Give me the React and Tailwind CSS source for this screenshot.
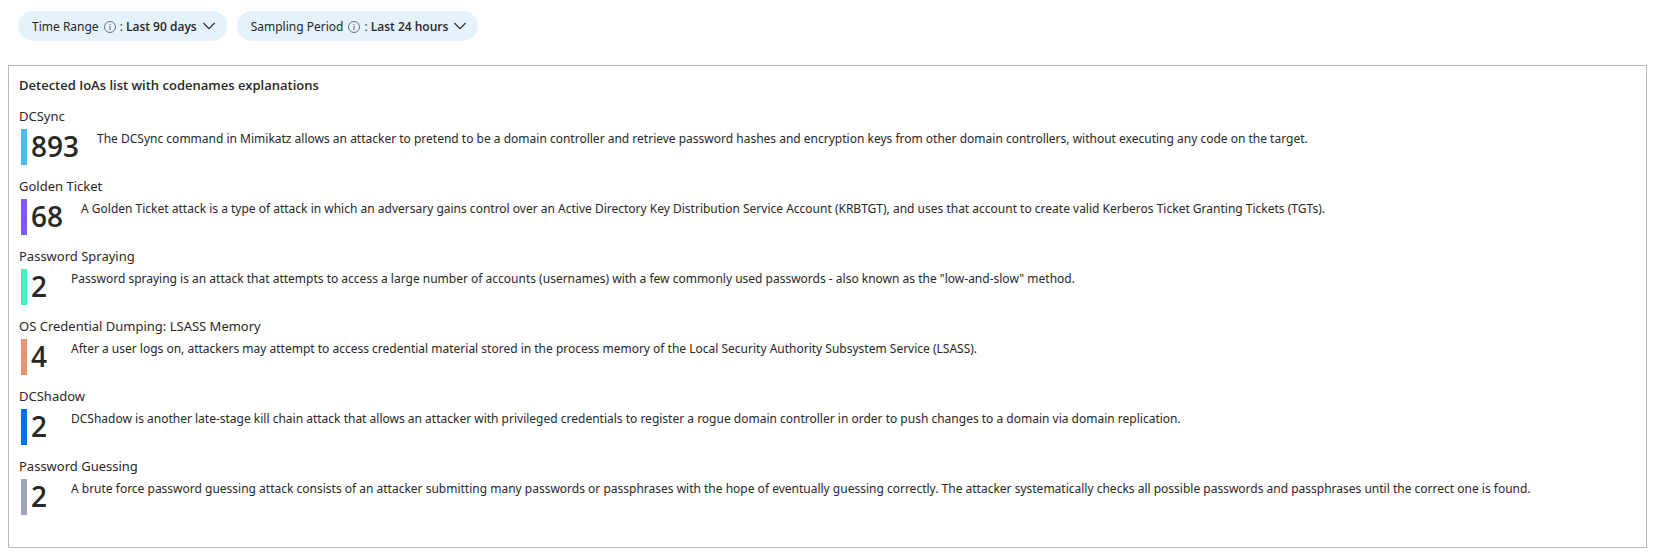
const items = [
  { name: 'DCSync', count: 893, bar: 'bg-[#47bdf5]', text: 'The DCSync command in Mimikatz allows an attacker to pretend to be a domain controller and retrieve password hashes and encryption keys from other domain controllers, without executing any code on the target.' },
  { name: 'Golden Ticket', count: 68, bar: 'bg-[#7e58ff]', text: 'A Golden Ticket attack is a type of attack in which an adversary gains control over an Active Directory Key Distribution Service Account (KRBTGT), and uses that account to create valid Kerberos Ticket Granting Tickets (TGTs).' },
  { name: 'Password Spraying', count: 2, bar: 'bg-[#44f1c5]', text: 'Password spraying is an attack that attempts to access a large number of accounts (usernames) with a few commonly used passwords - also known as the "low-and-slow" method.' },
  { name: 'OS Credential Dumping: LSASS Memory', count: 4, bar: 'bg-[#eb9371]', text: 'After a user logs on, attackers may attempt to access credential material stored in the process memory of the Local Security Authority Subsystem Service (LSASS).' },
  { name: 'DCShadow', count: 2, bar: 'bg-[#0071ed]', text: 'DCShadow is another late-stage kill chain attack that allows an attacker with privileged credentials to register a rogue domain controller in order to push changes to a domain via domain replication.' },
  { name: 'Password Guessing', count: 2, bar: 'bg-[#a2a4b9]', text: 'A brute force password guessing attack consists of an attacker submitting many passwords or passphrases with the hope of eventually guessing correctly. The attacker systematically checks all possible passwords and passphrases until the correct one is found.' },
];

function Pill({ label, value }) {
  return (
    <button type="button" className="flex h-[30px] items-center rounded-full bg-[#e5f1fb] pt-[2px] pr-3 pl-[14px] text-[12px]">
      <span className="font-['Noto_Sans',sans-serif]">{label}</span>
      <svg className="mr-1 ml-[5px] size-3 text-[#666]" viewBox="0 0 12 12" fill="none" stroke="currentColor" aria-hidden="true">
        <circle cx="6" cy="6" r="5.5" strokeWidth="0.9" />
        <path d="M6 5v4M6 3v1" />
      </svg>
      <span>:&nbsp;</span>
      <span className="font-semibold">{value}</span>
      <svg className="mb-[2px] ml-[6px] h-2 w-3" viewBox="0 0 12 8" fill="none" stroke="currentColor" strokeWidth="1.1" aria-hidden="true">
        <path d="M.4 1L6 6.6 11.6 1" />
      </svg>
    </button>
  );
}

export default function App() {
  return (
    <main className="bg-white pt-[11px] pr-[6px] pb-1 pl-2 font-['Open_Sans',sans-serif] text-[#292827]">
      <div className="flex gap-[10px] px-[10px]">
        <Pill label="Time Range" value="Last 90 days" />
        <Pill label="Sampling Period" value="Last 24 hours" />
      </div>
      <section className="mt-6 border border-[#b8b8b8] px-[10px] pt-[9px] pb-[21px]">
        <h1 className="text-[13px] leading-5 font-semibold">Detected IoAs list with codenames explanations</h1>
        <ul className="mt-[11px]">
          {items.map((item) => (
            <li key={item.name} className="pb-[11px]">
              <h2 className="font-['Noto_Sans',sans-serif] text-[13px] leading-5">{item.name}</h2>
              <div className="mt-[3px] flex pl-[2px]">
                <div className={`h-9 w-[6px] shrink-0 ${item.bar}`} />
                <div className="ml-1 min-w-[22px] text-[28px] leading-[34px] font-semibold">{item.count}</div>
                <p className="ml-[18px] font-['Noto_Sans',sans-serif] text-[12px] leading-5">{item.text}</p>
              </div>
            </li>
          ))}
        </ul>
      </section>
    </main>
  );
}
